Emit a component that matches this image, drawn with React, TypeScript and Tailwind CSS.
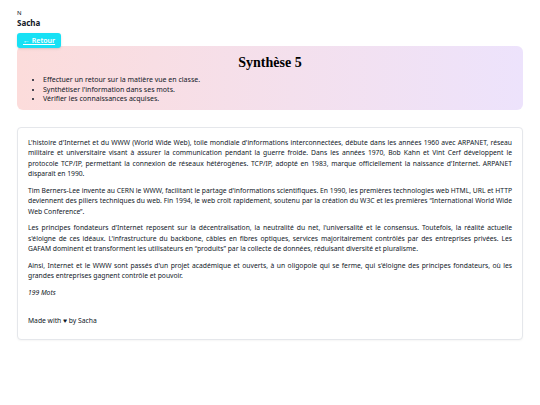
import React from 'react';

const paragraphs = [
  "L'histoire d'Internet et du WWW (World Wide Web), toile mondiale d'informations interconnectées, débute dans les années 1960 avec ARPANET, réseau militaire et universitaire visant à assurer la communication pendant la guerre froide. Dans les années 1970, Bob Kahn et Vint Cerf développent le protocole TCP/IP, permettant la connexion de réseaux hétérogènes. TCP/IP, adopté en 1983, marque officiellement la naissance d'Internet. ARPANET disparaît en 1990.",
  "Tim Berners-Lee invente au CERN le WWW, facilitant le partage d'informations scientifiques. En 1990, les premières technologies web HTML, URL et HTTP deviennent des piliers techniques du web. Fin 1994, le web croît rapidement, soutenu par la création du W3C et les premières \u201cInternational World Wide Web Conference\u201d.",
  "Les principes fondateurs d'Internet reposent sur la décentralisation, la neutralité du net, l'universalité et le consensus. Toutefois, la réalité actuelle s'éloigne de ces idéaux. L'infrastructure du backbone, câbles en fibres optiques, services majoritairement contrôlés par des entreprises privées. Les GAFAM dominent et transforment les utilisateurs en \u201cproduits\u201d par la collecte de données, réduisant diversité et pluralisme.",
  "Ainsi, Internet et le WWW sont passés d'un projet académique et ouverts, à un oligopole qui se ferme, qui s'éloigne des principes fondateurs, où les grandes entreprises gagnent contrôle et pouvoir.",
];

const goals = [
  'Effectuer un retour sur la matière vue en classe.',
  "Synthétiser l'information dans ses mots.",
  'Vérifier les connaissances acquises.',
];

const App: React.FC = () => {
  return (
    <div className="min-h-screen bg-white px-[17px] pt-[9px] text-[#111827] font-['Noto_Sans','Open_Sans',sans-serif]">
      {/* Header */}
      <div className="text-[6px] leading-[8px]">N</div>
      <div className="text-[8px] leading-[11px] font-bold">Sacha</div>

      <div className="relative z-10 mt-[5px] flex">
        <a
          href="#"
          className="rounded-[3px] bg-[#17e1f5] px-[6px] py-[3.5px] text-[7px] leading-[8px] font-semibold text-white underline shadow-sm"
        >
          ← Retour
        </a>
      </div>

      {/* Intro card */}
      <div className="-mt-[2px] rounded-[6px] bg-gradient-to-r from-[#fcdcdb] to-[#ede3fc] pt-[8px] pb-[6px]">
        <h1 className="text-center font-['Liberation_Serif',serif] text-[14px] leading-[17px] font-bold text-black">
          Synthèse 5
        </h1>
        <ul className="mt-[4px] list-disc pl-[26px] text-[7px] leading-[9.5px] text-[#111827]">
          {goals.map((g) => (
            <li key={g}>{g}</li>
          ))}
        </ul>
      </div>

      {/* Text card */}
      <div className="mt-[17px] rounded-[4px] border border-[#e5e7eb] bg-white px-[10px] pt-[10px] pb-[12px] shadow-[0_1px_2px_rgba(0,0,0,0.04)]">
        <div className="space-y-[6px] text-justify text-[6.75px] leading-[10.5px] text-[#111827]">
          {paragraphs.map((p, i) => (
            <p key={i}>{p}</p>
          ))}
          <p className="italic">199 Mots</p>
        </div>
        <div className="mt-[18px] text-[6.75px] leading-[10.5px] text-[#111827]">Made with ♥ by Sacha</div>
      </div>
    </div>
  );
};

export default App;
